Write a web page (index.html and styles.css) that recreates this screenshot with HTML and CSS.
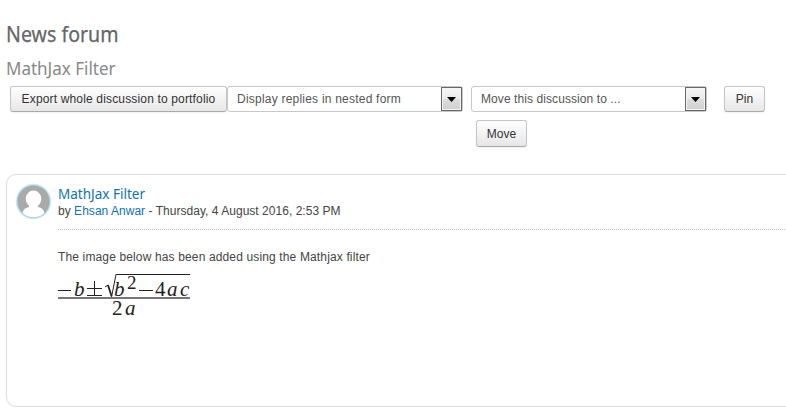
FILE: index.html
```
<!DOCTYPE html>
<html lang="en">
<head>
<meta charset="utf-8">
<title>News forum</title>
<link rel="stylesheet" href="styles.css">
</head>
<body>
<main>
  <h2><span>News forum</span></h2>
  <h3><span>MathJax Filter</span></h3>
  <div class="controls">
    <button class="btn export"><span>Export whole discussion to portfolio</span></button>
    <div class="select"><span class="nested">Display replies in nested form</span><i class="arrow"><svg width="9" height="5" viewBox="0 0 9 5"><path d="M0 0h9L4.500 5z"/></svg></i></div>
    <div class="mover">
      <div class="select"><span class="destination">Move this discussion to ...</span><i class="arrow"><svg width="9" height="5" viewBox="0 0 9 5"><path d="M0 0h9L4.500 5z"/></svg></i></div>
      <button class="btn move">Move</button>
    </div>
    <button class="btn pin">Pin</button>
  </div>
  <article class="post">
    <svg class="avatar" width="38" height="38" viewBox="0 0 38 38">
      <defs><clipPath id="face"><circle cx="18.500" cy="18.500" r="15.800"/></clipPath></defs>
      <circle class="glow" cx="18.500" cy="18.500" r="17.800"/>
      <circle class="ring" cx="18.500" cy="18.500" r="16.600"/>
      <circle class="disc" cx="18.500" cy="18.500" r="15.800"/>
      <g class="person" clip-path="url(#face)"><ellipse cx="18.500" cy="15.800" rx="7.800" ry="8.300"/><path d="M14 21h9v3c5 1 7 4 7 11H7c0-7 2-10 7-11z"/></g>
    </svg>
    <div class="body">
      <header>
        <h4><span>MathJax Filter</span></h4>
        <p class="byline">by <a>Ehsan Anwar</a> - Thursday, 4 August 2016, 2:53 PM</p>
      </header>
      <p class="text">The image below has been added using the Mathjax filter</p>
      <svg class="formula" width="134" height="50" viewBox="0 0 134 50">
        <path class="thin" d="M0 18.500h13M29 16.500h15M36.500 9v14M29 23.500h15M81 18.500h14"/>
        <text class="var" x="16" y="24">b</text>
        <path class="thin" d="M47 15l3-2"/><path class="root" d="M50 13l3.500 11"/><path class="thin" d="M53.500 25L58 2.500H132"/>
        <text class="var" x="56" y="24">b</text>
        <text class="num power" x="69" y="17">2</text>
        <text class="num" x="97" y="24">4</text>
        <text class="var" x="109" y="24">a</text>
        <text class="var" x="122" y="24">c</text>
        <path class="bar" d="M0 26h132"/>
        <text class="num" x="54" y="43">2</text>
        <text class="var" x="67" y="43">a</text>
      </svg>
    </div>
  </article>
</main>
</body>
</html>
```
FILE: styles.css
```
* { box-sizing: border-box; }
body { margin: 0; background: #fff; color: #444; font: 12px/20px "Liberation Sans", Arial, sans-serif; overflow: hidden; }
main { padding: 17px 0 0 6px; }
h2, h3, h4, p { margin: 0; font-weight: 400; }
h2, h3, h4 { font-family: "Noto Sans", sans-serif; }
h2 span, h3 span, h4 span { display: inline-block; transform-origin: left; white-space: nowrap; }
h2 { height: 34px; font-size: 22px; line-height: 32px; color: #666; -webkit-text-stroke: .25px #666; }
h2 span { transform: scaleX(.89); }
h3 { height: 35px; padding-top: 4px; font-size: 18px; line-height: 26px; color: #888; }
h3 span { transform: scaleX(.945); }
.controls { display: flex; align-items: flex-start; height: 88px; padding-left: 4px; }
.btn { height: 26px; padding: 0; border: 1px solid #c4c4c4; border-bottom-color: #aaa; border-radius: 3px; background: linear-gradient(#fff, #e6e6e6); box-shadow: 0 1px 2px rgba(0,0,0,.06); color: #333; font: inherit; white-space: nowrap; }
.export { width: 217px; letter-spacing: .16px; }
.select { display: flex; justify-content: space-between; width: 236px; height: 26px; padding-left: 9px; border: 1px solid #c8c8c8; border-radius: 3px; line-height: 24px; color: #555; }
.nested { letter-spacing: .22px; }
.destination { letter-spacing: .08px; }
.arrow { display: flex; align-items: center; justify-content: center; width: 21px; height: 24px; border: 1px solid #666; background: linear-gradient(#f4f4f4, #ebebeb 48%, #ddd 50%, #cfcfcf); box-shadow: inset 0 0 0 1px #f5f5f5; }
.mover { margin-left: 8px; width: 236px; }
.move { display: block; width: 51px; height: 27px; margin: 8px 0 0 5px; }
.pin { width: 41px; margin-left: 17px; }
.post { display: flex; height: 233px; width: 800px; padding: 8px 0 0 8px; border: 1px solid #ddd; border-radius: 10px; box-shadow: 0 0 2px rgba(0,0,0,.06); }
.avatar { flex: none; }
.glow { fill: #b5def2; opacity: .65; }
.ring { fill: #a0cce1; }
.disc { fill: #aaa; }
.person { fill: #fff; }
.body { flex: 1; margin-left: 5px; }
header { height: 47px; border-bottom: 1px dotted #bbb; }
h4 { height: 20px; font-size: 15px; line-height: 20px; color: #1372ac; }
h4 span { transform: scaleX(.9); }
.byline { padding-top: 1px; line-height: 15px; letter-spacing: .03px; }
.byline a { color: #1372ac; }
.text { margin-top: 17px; letter-spacing: .14px; }
.formula { display: block; margin-top: 5px; }
.formula text { fill: #222; font-family: "Liberation Serif", serif; font-size: 21px; }
.formula .var { font-style: italic; }
.formula .power { font-size: 19px; }
.thin { fill: none; stroke: #222; stroke-width: 1; }
.root { stroke: #222; stroke-width: 1.8; }
.bar { stroke: #777; stroke-width: 2; }
```
